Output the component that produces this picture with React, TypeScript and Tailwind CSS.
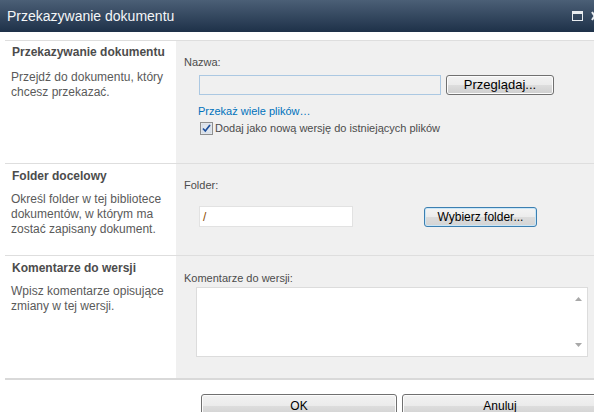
import React from 'react';

const font = { fontFamily: '"Liberation Sans", Arial, sans-serif' };

const Btn: React.FC<{ label: string; className?: string; focus?: boolean }> = ({ label, className = '', focus }) => (
  <button
    className={`flex items-center justify-center rounded-[3px] border text-[12px] text-black ${
      focus
        ? 'border-[#3c7fb1] bg-[linear-gradient(#f4f4f4_0%,#ececec_50%,#dcdcdc_51%,#d4d4d4_100%)] shadow-[inset_0_0_0_1px_#c9e6f7]'
        : 'border-[#707070] bg-[linear-gradient(#f2f2f2_0%,#ebebeb_50%,#dddddd_51%,#cfcfcf_100%)] shadow-[inset_0_0_0_1px_#fcfcfc]'
    } ${className}`}
  >
    {label}
  </button>
);

const Section: React.FC<{
  title: string;
  desc: string[];
  titlePt: string;
  descMt: string;
  children: React.ReactNode;
  h: string;
}> = ({ title, desc, titlePt, descMt, children, h }) => (
  <div className={`flex border-t border-[#dedede] ${h}`}>
    <div className={`w-[171px] shrink-0 bg-white pl-[6px] ${titlePt}`}>
      <div className="pl-[1px] text-[12px] font-bold leading-[14px] text-[#4c4c4c]">{title}</div>
      <div className={`text-[12px] leading-[15px] text-[#5a5a5a] ${descMt}`}>
        {desc.map((d) => (
          <div key={d}>{d}</div>
        ))}
      </div>
    </div>
    <div className="flex-1 bg-[#f0f0f0] pl-[8px]">{children}</div>
  </div>
);

const App: React.FC = () => {
  return (
    <div className="relative h-[412px] w-[594px] overflow-hidden bg-white" style={font}>
      {/* Title bar */}
      <div className="flex h-[32px] items-center bg-[linear-gradient(#4b5f76,#1e3149)] pl-[7px]">
        <span className="text-[14px] text-[#f4f6f8]">Przekazywanie dokumentu</span>
        <div className="ml-auto mr-[-4px] flex items-center gap-[8px]">
          <svg width="11" height="10" viewBox="0 0 11 10">
            <rect x="0.5" y="0.5" width="10" height="9" fill="none" stroke="#e8ecf0" />
            <rect x="1" y="1" width="9" height="2" fill="#e8ecf0" />
          </svg>
          <svg width="7" height="10" viewBox="0 0 7 10">
            <path d="M1 1 L6 9 M6 1 L1 9" stroke="#e8ecf0" strokeWidth="2" />
          </svg>
        </div>
      </div>

      <div className="pl-[5px] pt-[8px]">
        <Section
          title="Przekazywanie dokumentu"
          desc={['Przejdź do dokumentu, który', 'chcesz przekazać.']}
          titlePt="pt-[4px]"
          descMt="mt-[11px]"
          h="h-[123px]"
        >
          <div className="pt-[14px] text-[11px] leading-[14px] text-[#4c4c4c]">Nazwa:</div>
          <div className="ml-[15px] mt-[6px] flex items-center">
            <div className="h-[20px] w-[242px] border border-[#abc8e2] bg-[#f0f0f0]" />
            <Btn label="Przeglądaj..." className="ml-[5px] h-[20px] w-[108px] text-[13px]" />
          </div>
          <div className="ml-[14px] mt-[9px] text-[11px] leading-[14px] text-[#0072bc]">Przekaż wiele plików…</div>
          <div className="ml-[16px] mt-[3px] flex items-center gap-[2px]">
            <svg width="13" height="13" viewBox="0 0 13 13">
              <rect x="0.5" y="0.5" width="12" height="12" fill="#e9eef3" stroke="#8e8f8f" />
              <rect x="2" y="2" width="9" height="9" fill="#dfe6ee" stroke="#c5ccd6" strokeWidth="0.5" />
              <path d="M3 6.5 L5.3 9 L10 3" fill="none" stroke="#1d4f9c" strokeWidth="1.7" />
            </svg>
            <span className="text-[11px] leading-[15px] text-[#4c4c4c]">Dodaj jako nową wersję do istniejących plików</span>
          </div>
        </Section>

        <Section
          title="Folder docelowy"
          desc={['Określ folder w tej bibliotece', 'dokumentów, w którym ma', 'zostać zapisany dokument.']}
          titlePt="pt-[5px]"
          descMt="mt-[9px]"
          h="h-[92px]"
        >
          <div className="pt-[14px] text-[11px] leading-[14px] text-[#4c4c4c]">Folder:</div>
          <div className="ml-[15px] mt-[14px] flex items-center">
            <div className="flex h-[21px] w-[154px] items-center border border-[#e2e2e2] bg-white pl-[3px] text-[12px] text-[#8a4b00]">
              /
            </div>
            <Btn label="Wybierz folder..." focus className="ml-[71px] h-[20px] w-[113px]" />
          </div>
        </Section>

        <Section
          title="Komentarze do wersji"
          desc={['Wpisz komentarze opisujące', 'zmiany w tej wersji.']}
          titlePt="pt-[5px]"
          descMt="mt-[9px]"
          h="h-[123px]"
        >
          <div className="pt-[15px] text-[11px] leading-[14px] text-[#4c4c4c]">Komentarze do wersji:</div>
          <div className="ml-[12px] mt-[2px] flex h-[70px] w-[392px] border border-[#dcdcdc] bg-white">
            <div className="flex-1" />
            <div className="flex w-[17px] flex-col items-center justify-between py-[9px]">
              <svg width="7" height="4" viewBox="0 0 7 4">
                <path d="M0 4 L3.5 0 L7 4 Z" fill="#a8a8a8" />
              </svg>
              <svg width="7" height="4" viewBox="0 0 7 4">
                <path d="M0 0 L3.5 4 L7 0 Z" fill="#a8a8a8" />
              </svg>
            </div>
          </div>
        </Section>

        <div className="h-[2px] bg-[#d9d9d9]" />

        <div className="mt-[14px] flex pl-[196px]">
          <Btn label="OK" className="h-[24px] w-[196px] shrink-0" />
          <Btn label="Anuluj" className="ml-[5px] h-[24px] w-[196px] shrink-0" />
        </div>
      </div>
    </div>
  );
};

export default App;
